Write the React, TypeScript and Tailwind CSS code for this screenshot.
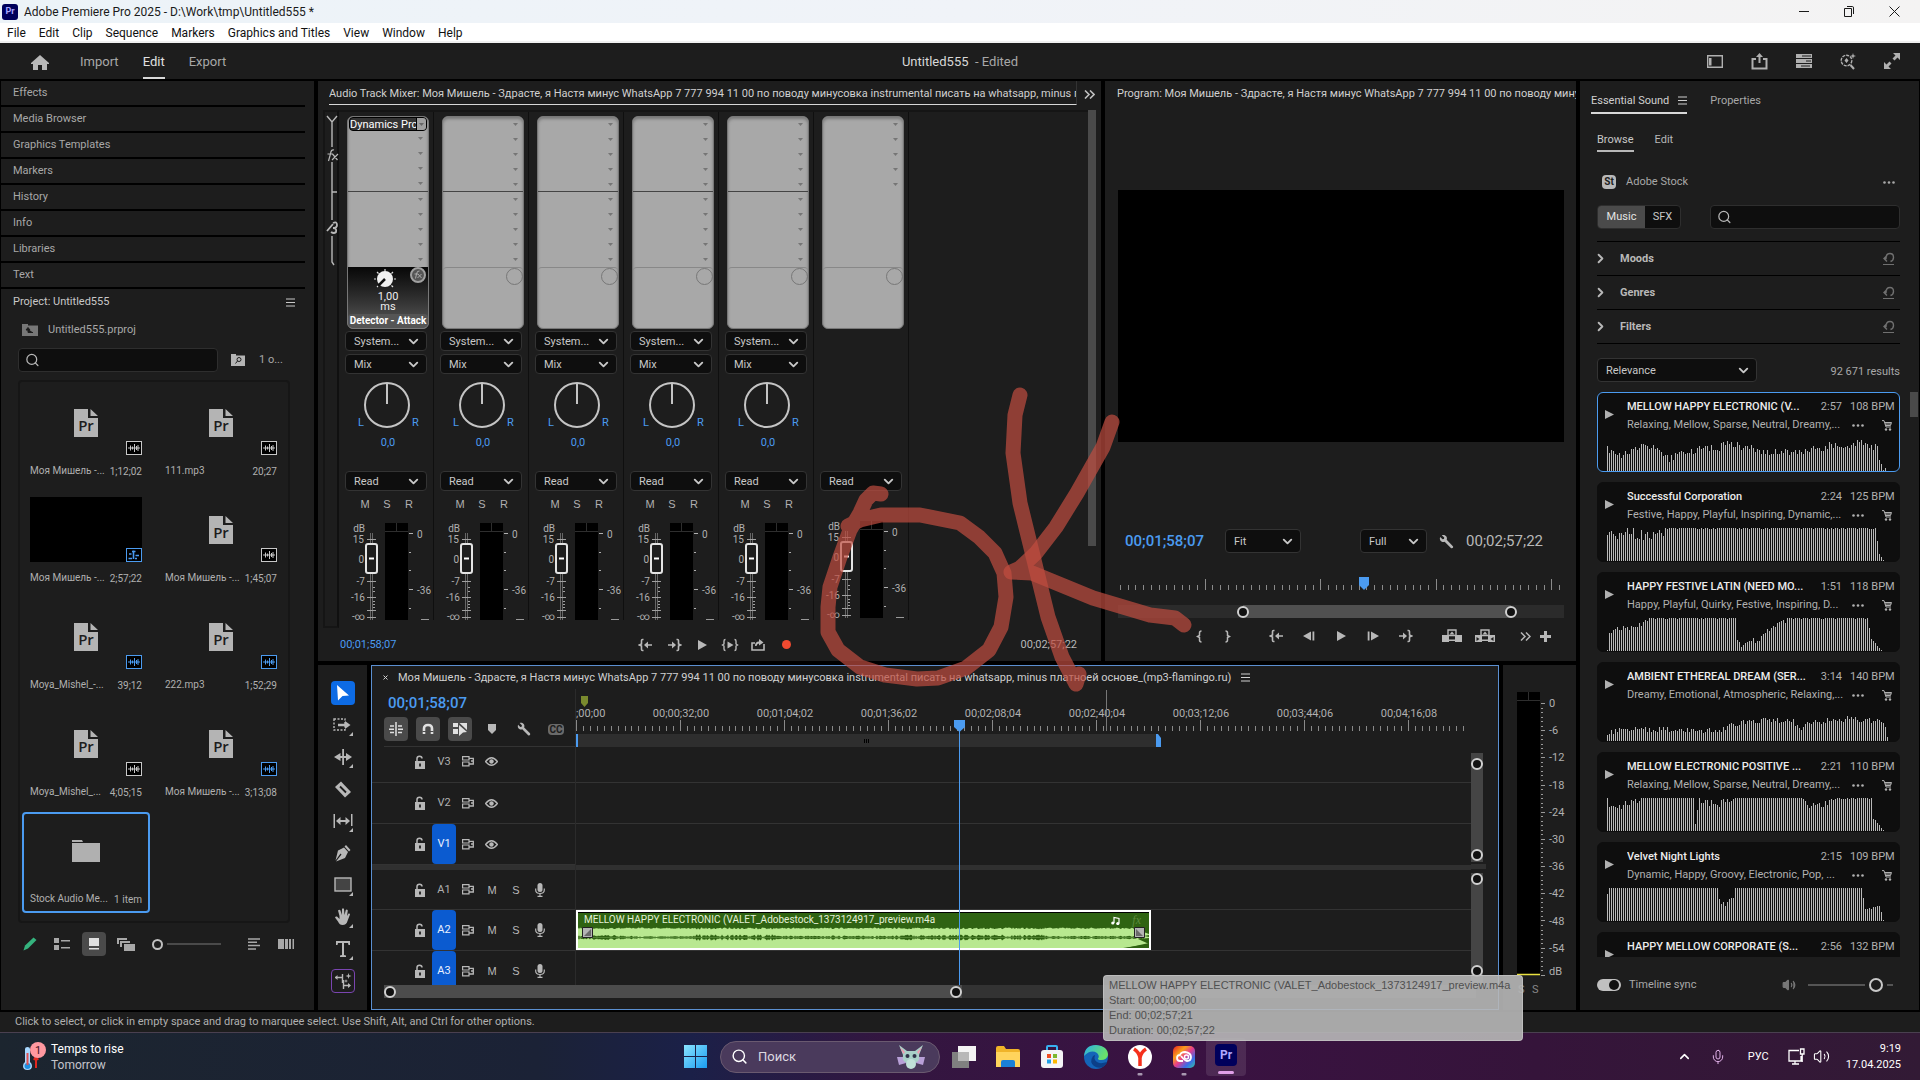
import React from 'react';
import { ChevronDown, ChevronRight, ChevronUp, Mic, Search, Volume2 } from 'lucide-react';

type Kids = { children: React.ReactNode };

function Ico({ w, h, children, className = '' }: { w: number; h: number; className?: string } & Kids) {
  return (
    <svg width={w} height={h} viewBox={`0 0 ${w} ${h}`} className={`shrink-0 ${className}`} fill="currentColor" aria-hidden="true">
      {children}
    </svg>
  );
}

function Btn({ label, className = '', children }: { label: string; className?: string } & Kids) {
  return (
    <button type="button" aria-label={label} className={`flex items-center justify-center ${className}`}>
      {children}
    </button>
  );
}

function Pick({ label, value, className }: { label: string; value: string; className: string }) {
  return (
    <div className={`relative ${className}`}>
      <select aria-label={label} className="h-full w-full appearance-none rounded border border-[#333] bg-[#0e0e0e] pl-2 pr-5 text-[11px] leading-none text-[#c8c8c8]">
        <option>{value}</option>
      </select>
      <ChevronDown className="pointer-events-none absolute right-1.5 top-1/2 -mt-[7px] text-[#c8c8c8]" size={15} strokeWidth={3} />
    </div>
  );
}

const Burger = () => (
  <Ico w={9} h={9}>
    <path d="M0 1h9M0 4.5h9M0 8h9" stroke="currentColor" strokeWidth="1" />
  </Ico>
);

const Wrench = ({ size = 16 }: { size?: number }) => (
  <svg width={size} height={size} viewBox="0 0 16 16" fill="currentColor" aria-hidden="true">
    <path d="M3 1.2 5.6 3.8 5.3 5.4 3.8 5.7 1.2 3.1C.5 5 1 7 2.6 8 3.7 8.700 5 8.800 6 8.300L12.700 15 C13.500 15.600 14.600 15.300 15 14.500 15.300 13.800 15.100 13.200 14.600 12.700L8.200 6.200C8.700 5 8.600 3.500 7.600 2.400 6.500 1.100 4.700.6 3 1.200Z" />
  </svg>
);

/* ---------- transport icons ---------- */
const GoIn = () => (
  <Ico w={16} h={14}>
    <path d="M5.500 1.500H4.500Q3.500 1.500 3.500 2.500V6L1.500 7 3.500 8V11.500Q3.500 12.500 4.500 12.500H5.500M9 7H14" stroke="currentColor" strokeWidth="1.600" fill="none" />
    <path d="M6 7 10 3.500V10.500Z" />
  </Ico>
);
const GoOut = () => (
  <Ico w={16} h={14}>
    <path d="M10.500 1.500H11.500Q12.500 1.500 12.500 2.500V6L14.500 7 12.500 8V11.500Q12.500 12.500 11.500 12.500H10.500M2 7H7" stroke="currentColor" strokeWidth="1.600" fill="none" />
    <path d="M10 7 6 3.500V10.500Z" />
  </Ico>
);
const Play = () => (
  <Ico w={12} h={12}>
    <path d="M2 1 11 6 2 11Z" />
  </Ico>
);
const PlayInOut = () => (
  <Ico w={18} h={14}>
    <path d="M4.500 1.500Q3 1.500 3 3V6L1.500 7 3 8V11Q3 12.500 4.500 12.500M13.500 1.500Q15 1.500 15 3V6L16.500 7 15 8V11Q15 12.500 13.500 12.500" stroke="currentColor" strokeWidth="1.400" fill="none" />
    <path d="M6.500 3.500 12.500 7 6.500 10.500Z" />
  </Ico>
);
const LoopIco = () => (
  <Ico w={16} h={14}>
    <path d="M5 5H2V12H14V6" stroke="currentColor" strokeWidth="1.600" fill="none" />
    <path d="M5 8Q5 3.500 9 3.500V1L13.500 4.500 9 7.500V5.500Q7 5.500 6.500 8Z" />
  </Ico>
);
const Brace = ({ flip = false }: { flip?: boolean }) => (
  <Ico w={7} h={13} className={flip ? '-scale-x-100' : ''}>
    <path d="M5.500 1Q3.500 1 3.500 3V5.500L1.500 6.500 3.500 7.500V10Q3.500 12 5.500 12" stroke="currentColor" strokeWidth="1.500" fill="none" />
  </Ico>
);
const StepBack = () => (
  <Ico w={12} h={12}>
    <path d="M8 1.500V10.500L0 6Z M9.500 1.500h1.800v9H9.500Z" />
  </Ico>
);
const Lift = ({ extract = false }: { extract?: boolean }) => (
  <Ico w={20} h={14}>
    <path d="M0 6H7V13H0ZM13 6H20V13H13ZM6.500 10.500H13.500V12H6.500Z" />
    <path d="M6 1H14V6.500H6Z" fill="none" stroke="currentColor" strokeWidth="1.400" />
    <path d="M10 2.500 12.500 5.500H7.500Z" />
    {extract && <path d="M1.500 8 4.500 10 1.500 12ZM18.500 8 15.500 10 18.500 12Z" fill="#1d1d1d" />}
  </Ico>
);

/* ---------- left column ---------- */
const collapsed = ['Effects', 'Media Browser', 'Graphics Templates', 'Markers', 'History', 'Info', 'Libraries', 'Text'];

type Clip = { name: string; time: string; kind: 'file' | 'seq' | 'bin'; blue?: boolean };
const clips: Clip[] = [
  { name: 'Моя Мишель -...', time: '1;12;02', kind: 'file' },
  { name: '111.mp3', time: '20;27', kind: 'file' },
  { name: 'Моя Мишель -...', time: '2;57;22', kind: 'seq', blue: true },
  { name: 'Моя Мишель -...', time: '1;45;07', kind: 'file' },
  { name: 'Moya_Mishel_-...', time: '39;12', kind: 'file', blue: true },
  { name: '222.mp3', time: '1;52;29', kind: 'file', blue: true },
  { name: 'Moya_Mishel_...', time: '4;05;15', kind: 'file' },
  { name: 'Моя Мишель -...', time: '3;13;08', kind: 'file', blue: true },
  { name: 'Stock Audio Me...', time: '1 item', kind: 'bin' },
];

const PrFile = () => (
  <div className="relative flex h-7 w-6 items-center justify-center">
    <svg width="24" height="28" viewBox="0 0 24 28" className="absolute inset-0 text-[#b4b4b4]" fill="currentColor" aria-hidden="true">
      <path d="M0 0H14V9H24V28H0ZM16.500 0 24 7H16.500Z" />
    </svg>
    <span className="relative mt-1 font-['Open_Sans'] text-[15px] font-semibold leading-4 text-[#1d1d1d]">Pr</span>
  </div>
);

function Badge({ seq, blue }: { seq: boolean; blue?: boolean }) {
  return (
    <Ico w={16} h={14} className={blue ? 'text-[#4b9bf0]' : 'text-[#c8c8c8]'}>
      <rect x="0.500" y="0.500" width="15" height="13" fill="#000" stroke="currentColor" />
      {seq ? (
        <path d="M7.500 2.500V11M6 3.500H9.500M3 6H5.500M9.500 7.500H13M2.500 10.500H6M9 10.500H11" stroke="currentColor" strokeWidth="1.600" />
      ) : (
        <path d="M2 7H14M4.500 4.500V9.500M6.500 5.500V8.500M8.500 3V11M10.500 5V9M12 4V10" stroke="currentColor" strokeWidth="1" />
      )}
    </Ico>
  );
}

function ProjectPanel() {
  return (
    <section className="flex w-[313px] shrink-0 flex-col bg-[#1d1d1d]">
      {collapsed.map((t) => (
        <button key={t} type="button" className="mr-[9px] flex h-[26px] items-center border-b-2 border-black pl-3 text-left text-[#a8a8a8]">
          {t}
        </button>
      ))}
      <div className="flex h-[26px] items-center justify-between pl-3 pr-[19px] text-[#c8c8c8]">
        <h2>Project: Untitled555</h2>
        <Btn label="Panel menu"><Burger /></Btn>
      </div>
      <div className="flex h-[30px] items-center gap-2.5 pl-[21px] text-[#a8a8a8]">
        <Ico w={16} h={12} className="text-[#777]">
          <path d="M0 0H6V1.500H16V12H0Z" />
          <path d="M6 5V8.500H11M6 3.500 4 6H8Z" stroke="#1d1d1d" fill="#1d1d1d" />
        </Ico>
        Untitled555.prproj
      </div>
      <div className="mt-[3px] flex h-6 items-center pl-[17px] text-[#a8a8a8]">
        <label className="flex h-6 w-[200px] items-center rounded border border-[#2e2e2e] bg-[#0e0e0e] pl-1.5">
          <Search size={16} className="text-[#b8b8b8]" />
          <input aria-label="Search project" className="w-full bg-transparent outline-none" />
        </label>
        <Btn label="Filter bin" className="ml-[13px] text-[#b4b4b4]">
          <Ico w={14} h={12}>
            <path d="M0 0H5V1.500H14V12H0Z" />
            <circle cx="8" cy="5.500" r="2" fill="none" stroke="#1d1d1d" />
            <path d="M6.500 7 4.500 9.500" stroke="#1d1d1d" />
          </Ico>
        </Btn>
        <span className="ml-3.5">1 о...</span>
      </div>
      <div className="ml-[17px] mr-6 mt-2 grid h-[543px] grid-cols-[128px_128px] content-start gap-x-[7px] gap-y-1.5 rounded border-2 border-[#161616] pl-0.5 pt-0.5">
        {clips.map((c, i) => (
          <article key={i} className={`flex h-[101px] flex-col rounded border-2 px-1.5 text-[#b0b0b0] ${c.kind === 'bin' ? 'border-[#4b9bf0]' : 'border-transparent'}`}>
            <div className={`relative mt-1 flex h-[65px] items-center justify-center ${c.kind === 'seq' ? 'bg-black' : ''}`}>
              {c.kind === 'file' && <PrFile />}
              {c.kind === 'bin' && (
                <Ico w={28} h={22}><path d="M0 0H10L11 2H0ZM0 3H28V22H0Z" /></Ico>
              )}
              {c.kind !== 'bin' && (
                <div className="absolute bottom-0 right-0"><Badge seq={c.kind === 'seq'} blue={c.blue} /></div>
              )}
            </div>
            <div className="mt-2 flex h-4 items-center justify-between whitespace-nowrap text-[10px]">
              <span>{c.name}</span>
              <span className="mt-0.5">{c.time}</span>
            </div>
          </article>
        ))}
      </div>
      <div className="mt-[9px] flex h-6 items-center pl-[21px] text-[#a8a8a8]">
        <Btn label="Writable" className="w-4 text-[#35b37e]">
          <Ico w={14} h={14}><path d="M10.500.5 13.500 3 5 11.500 .5 13.500 2 8.500Z" /></Ico>
        </Btn>
        <Btn label="List view" className="ml-4">
          <Ico w={16} h={12}><path d="M0 0H5V5H0ZM0 7H5V12H0ZM7 2H16V3.500H7ZM7 9H16V10.500H7Z" /></Ico>
        </Btn>
        <Btn label="Icon view" className="ml-3 h-6 w-6 rounded bg-[#4a4a4a] text-[#e0e0e0]">
          <Ico w={12} h={12}><path d="M1 0H11V8H1ZM1 10H11V11.500H1Z" /></Ico>
        </Btn>
        <Btn label="Freeform view" className="ml-[11px]">
          <Ico w={18} h={13}>
            <path d="M0 0H10V2H2V6H0ZM3 3H13V5H5V9H3ZM7 6H18V13H7Z" />
          </Ico>
        </Btn>
        <span className="ml-[17px] h-[11px] w-[11px] rounded-full border-2 border-[#c0c0c0]" />
        <span className="ml-1 h-0.5 w-[54px] bg-[#4a4a4a]" />
        <Btn label="Sort" className="ml-[27px]">
          <Ico w={13} h={12}><path d="M0 1H12M0 4.300H9M0 7.600H12M0 11H8" stroke="currentColor" strokeWidth="1.500" /></Ico>
        </Btn>
        <Btn label="Automate to sequence" className="ml-[17px]">
          <Ico w={16} h={10}><path d="M0 0H6V10H0ZM7 0H10V10H7ZM11 0H13V10H11ZM14.500 0H16V10H14.500Z" /></Ico>
        </Btn>
      </div>
    </section>
  );
}

/* ---------- audio mixer ---------- */
const Slot = ({ first = false }: { first?: boolean }) =>
  first ? (
    <div className="mx-px flex h-[14px] items-center justify-between overflow-hidden rounded-sm border border-black bg-[#333] text-[11px] leading-none text-white">
      <span className="w-[67px] overflow-hidden whitespace-nowrap">Dynamics Prc</span>
      <button type="button" aria-label="Effect slot" className="flex h-full w-2.5 items-center justify-center border-l border-black bg-[#a0a0a0] text-[#666]">
        <Ico w={5} h={3}><path d="M0 0H5L2.500 3Z" /></Ico>
      </button>
    </div>
  ) : (
    <button type="button" aria-label="Effect slot" className="flex h-[15px] w-full items-center justify-end pr-[5px] text-[#757575]">
      <Ico w={5} h={3}><path d="M0 0H5L2.500 3Z" /></Ico>
    </button>
  );

function EffectBox({ active, master }: { active: boolean; master: boolean }) {
  return (
    <div className="ml-2 mt-1 flex h-[213px] w-[82px] flex-col overflow-hidden rounded-md border border-[#777] bg-[#a8a8a8] shadow-[inset_0_2px_3px_#777]">
      <div className={`h-[75px] ${master ? '' : 'border-b border-[#444]'}`}>
        {[0, 1, 2, 3, 4].map((k) => <Slot key={k} first={active && k === 0} />)}
      </div>
      <div className="h-[75px]">{!master && [0, 1, 2, 3, 4].map((k) => <Slot key={k} />)}</div>
      {active ? (
        <div className="flex flex-1 flex-col items-center bg-gradient-to-b from-[#080808] to-[#5a5a5a] text-[#eee]">
          <div className="flex w-full justify-end">
            <svg width="60" height="22" viewBox="0 0 60 22" aria-hidden="true">
              <g stroke="#ddd" strokeWidth="1.200"><path d="M17 2V4M9 5 10.500 6.500M25 5 23.500 6.500M6 12H8M26 12H28M9 20 10.500 18.500M25 20 23.500 18.500" /></g>
              <circle cx="17" cy="12" r="8" fill="#f0f0f0" />
              <path d="M17 12 10 19" stroke="#111" strokeWidth="2.500" />
              <circle cx="50" cy="8" r="7" fill="#555" stroke="#a0a0a0" strokeWidth="2" />
              <path d="M51.500 4Q49 3.500 48.500 7L47.500 11.500M46.500 7H50M50 7 53.500 11M53.500 7 49.500 11" stroke="#aaa" fill="none" />
            </svg>
          </div>
          <span className="mt-0.5 leading-[11px]">1,00</span>
          <span className="leading-[10px]">ms</span>
          <span className="mt-auto flex w-full items-center justify-center whitespace-nowrap rounded-t bg-[#555] text-[10px] font-bold leading-[14px] text-white">Detector - Attack</span>
        </div>
      ) : (
        <div className="relative flex flex-1 justify-end rounded-t border-t border-[#888]">
          <span className="h-[17px] w-[17px] rounded-full border border-[#777]" />
        </div>
      )}
    </div>
  );
}

const Knob = () => (
  <svg width="95" height="76" className="block" fontSize="11" fill="#4b9bf0" aria-hidden="true">
    <circle cx="48" cy="31" r="22" fill="none" stroke="#c4c4c4" strokeWidth="2" />
    <path d="M48 9V30" stroke="#c4c4c4" strokeWidth="2" />
    <text x="19" y="52">L</text>
    <text x="73" y="52">R</text>
    <text x="49" y="72" textAnchor="middle">0,0</text>
  </svg>
);

const Fader = () => (
  <svg width="94" height="105" className="block" fontSize="10" fill="#b0b0b0" aria-hidden="true">
    <g textAnchor="end">
      <text x="26" y="17">dB</text>
      <text x="25" y="28">15</text>
      <text x="25" y="48">0</text>
      <text x="26" y="70">-7</text>
      <text x="26" y="86">-16</text>
      <text x="26" y="105">-∞</text>
    </g>
    <path d="M32.500 18V105" stroke="#666" strokeWidth="3" />
    <path d="M32.500 18V105" stroke="#1d1d1d" strokeWidth="1" />
    <path d="M28 24.500H37M28 66.500H37M28 82.500H37M28 95.500H37M28 102.500H37M34 72.500H36M34 76.500H36M34 86.500H36M34 89.500H36M34 92.500H36" stroke="#a0a0a0" />
    <rect x="27" y="29" width="11" height="29" rx="2" fill="#1d1d1d" stroke="#e4e4e4" strokeWidth="2" />
    <path d="M30 43.500H35" stroke="#fff" strokeWidth="2" />
    <rect x="46" y="8" width="23" height="97" fill="#000" />
    <path d="M46 16.500H69M57.500 8V16" stroke="#2e2e2e" />
    <path d="M70 18.500H74M70 37.500H72M70 55.500H72M70 74.500H74M70 93.500H72" stroke="#b0b0b0" />
    <text x="78" y="23">0</text>
    <text x="78" y="79">-36</text>
    <path d="M82 104.500H90" stroke="#999" />
  </svg>
);

function Strip({ index }: { index: number }) {
  const master = index === 5;
  return (
    <div className="w-[95px] shrink-0 overflow-hidden border-r border-[#0f0f0f]">
      <EffectBox active={index === 0} master={master} />
      {master ? (
        <div className="h-[142px]" />
      ) : (
        <>
          <Pick label="Track input" value="System..." className="ml-1.5 mt-0.5 h-5 w-[82px]" />
          <Pick label="Track output" value="Mix" className="ml-1.5 mt-[3px] h-5 w-[82px]" />
          <Knob />
          <div className="h-[21px]" />
        </>
      )}
      <Pick label="Automation mode" value="Read" className="ml-1.5 h-5 w-[82px]" />
      {master ? (
        <div className="h-[22px]" />
      ) : (
        <div className="mb-0.5 ml-[15px] mt-1 flex h-[18px] font-['Liberation_Sans'] text-[#b0b0b0]">
          {['M', 'S', 'R'].map((l) => <button key={l} type="button" className="w-[22px]">{l}</button>)}
        </div>
      )}
      <Fader />
    </div>
  );
}

const sequence = 'Моя Мишель - Здрасте, я Настя минус WhatsApp 7 777 994 11 00 по поводу минусовка instrumental писать на whatsapp, minus платноей основе_(mp3-flamingo.ru)';
const mixerTitle = `Audio Track Mixer: ${sequence.slice(0, sequence.indexOf('атноей'))}`;
const programTitle = `Program: ${sequence.slice(0, sequence.indexOf('совка'))}`;

function MixerPanel() {
  return (
    <section className="flex w-[783px] shrink-0 flex-col overflow-hidden bg-[#1d1d1d]">
      <div className="flex h-[29px] items-start pl-[11px]">
        <h2 className="h-6 w-[748px] overflow-hidden whitespace-nowrap border-b border-r border-b-[#d8d8d8] border-r-[#333] leading-[26px] text-[#d0d0d0]">{mixerTitle}</h2>
        <Btn label="More tabs" className="h-[26px] w-6 text-[#c0c0c0]">
          <Ico w={11} h={9}><path d="M1 .5 5 4.500 1 8.500M6 .5 10 4.500 6 8.500" fill="none" stroke="currentColor" strokeWidth="1.600" /></Ico>
        </Btn>
      </div>
      <div className="flex h-[518px] pl-[5px] pr-[5px]">
        <div className="w-4 border-2 border-[#151515] border-r-[#101010] text-[#b8b8b8]">
          <svg width="14" height="160" className="block" fill="none" stroke="currentColor" strokeWidth="1.400" aria-hidden="true">
            <path d="M2 4 7 10 12 4M7 10V35M7 50V80H12M7 80V108M7 124V150L9 153" />
            <path d="M9 38Q6 37 5.500 42L3.500 49M2.500 42H8M7.500 42 12.500 48M13 42 7 48" strokeWidth="1.200" />
            <path d="M2 119 8 112M8 111Q12 109 12 113 12 116 8 116 12 116 11 120 9 122 6 120" strokeWidth="1.800" />
          </svg>
        </div>
        <div className="flex h-[510px] flex-1 overflow-hidden border-t-2 border-[#151515]">
          {[0, 1, 2, 3, 4, 5].map((i) => <Strip key={i} index={i} />)}
        </div>
        <div className="h-[436px] w-2 bg-[#4a4a4a]" />
      </div>
      <div className="flex flex-1 items-center pl-[22px] pr-6 text-[#b8b8b8]">
        <span className="w-[292px] text-[#4b9bf0]">00;01;58;07</span>
        <div className="flex flex-1">
          <Btn label="Go to in" className="w-7"><GoIn /></Btn>
          <Btn label="Go to out" className="w-7"><GoOut /></Btn>
          <Btn label="Play" className="w-7"><Play /></Btn>
          <Btn label="Play in to out" className="w-7"><PlayInOut /></Btn>
          <Btn label="Loop" className="w-7"><LoopIco /></Btn>
          <Btn label="Record" className="w-7"><span className="h-[9px] w-[9px] rounded-full bg-[#f04a30]" /></Btn>
        </div>
        <span>00;02;57;22</span>
      </div>
    </section>
  );
}

/* ---------- program monitor ---------- */
function ProgramPanel() {
  const ticks = Array.from({ length: 58 }, (_, i) => 2 + Math.round(i * 7.7));
  return (
    <section className="flex min-w-0 flex-1 flex-col overflow-hidden bg-[#1d1d1d]">
      <h2 className="h-[109px] overflow-hidden whitespace-nowrap pl-3 leading-[26px] text-[#d0d0d0]">{programTitle}</h2>
      <div className="ml-[13px] mr-3 h-[252px] bg-black" />
      <div className="mt-[87px] flex h-6 items-center pl-5 pr-[33px] text-[#b8b8b8]">
        <span className="text-[15px] font-medium text-[#4b9bf0]">00;01;58;07</span>
        <Pick label="Zoom level" value="Fit" className="ml-[21px] h-6 w-[76px]" />
        <Pick label="Playback resolution" value="Full" className="ml-auto h-6 w-[67px]" />
        <Btn label="Settings" className="ml-3"><Wrench size={15} /></Btn>
        <span className="ml-3 text-[15px]">00;02;57;22</span>
      </div>
      <svg width="100%" height="16" className="ml-[13px] mt-6 block" aria-hidden="true">
        {ticks.map((x, i) => <rect key={i} x={x} y={i % 15 === 11 ? 2 : 8} width="1" height={i % 15 === 11 ? 11 : 5} fill="#8a8a8a" />)}
        <path d="M241 0H251V8L246 13 241 8Z" fill="#4b9bf0" />
      </svg>
      <div className="ml-[13px] mr-3 mt-3 flex h-[13px] items-center bg-[#2b2b2b]">
        <div className="ml-[119px] flex h-[13px] w-[280px] items-center justify-between bg-[linear-gradient(90deg,transparent_6px,#505050_6px,#505050_calc(100%-6px),transparent_calc(100%-6px))]">
          <span className="h-3 w-3 rounded-full border-2 border-[#d0d0d0] bg-[#111]" />
          <span className="h-3 w-3 rounded-full border-2 border-[#d0d0d0] bg-[#111]" />
        </div>
      </div>
      <div className="mt-2 flex h-5 items-center pl-[84px] text-[#b8b8b8]">
        <Btn label="Mark in" className="w-5"><Brace /></Btn>
        <Btn label="Mark out" className="ml-2 w-5"><Brace flip /></Btn>
        <Btn label="Go to in" className="ml-[30px] w-5"><GoIn /></Btn>
        <Btn label="Step back" className="ml-3 w-5"><StepBack /></Btn>
        <Btn label="Play" className="ml-3 w-5"><Play /></Btn>
        <Btn label="Step forward" className="ml-3 w-5 -scale-x-100"><StepBack /></Btn>
        <Btn label="Go to out" className="ml-3 w-5"><GoOut /></Btn>
        <Btn label="Lift" className="ml-[27px] w-5"><Lift /></Btn>
        <Btn label="Extract" className="ml-[13px] w-5"><Lift extract /></Btn>
        <Btn label="More" className="ml-5 w-5">
          <Ico w={11} h={9}><path d="M1 .5 5 4.500 1 8.500M6 .5 10 4.500 6 8.500" fill="none" stroke="currentColor" strokeWidth="1.500" /></Ico>
        </Btn>
        <Btn label="Add button" className="w-5">
          <Ico w={11} h={11}><path d="M4 0H7V4H11V7H7V11H4V7H0V4H4Z" /></Ico>
        </Btn>
      </div>
    </section>
  );
}

/* ---------- tools ---------- */
const corner = <path d="M21 18V22H17Z" />;
const tools: { name: string; art: React.ReactNode }[] = [
  { name: 'Track select', art: <><rect x="2" y="5" width="11" height="11" fill="none" stroke="currentColor" strokeWidth="1.400" strokeDasharray="2 1.500" /><path d="M6 9.800H13V7L18.500 11 13 15V12.200H6Z" />{corner}</> },
  { name: 'Ripple edit', art: <><path d="M10.200 3H12V19H10.200ZM8.500 7V10H14V7L20 11 14 15V12H8.500V15L2 11 8.500 7Z" />{corner}</> },
  { name: 'Razor', art: <><path d="M3 9 9 3.500 19 14 13 19.500Z" /><path d="M8 8.500 14 14.500" stroke="#1d1d1d" strokeWidth="1.800" /></> },
  { name: 'Slip', art: <><path d="M1.500 4H3V18H1.500ZM19 4H20.500V16H19ZM8.500 7 4 11 8.500 15V12H13.500V15L18 11 13.500 7V10H8.500Z" fillRule="evenodd" />{corner}</> },
  { name: 'Pen', art: <path d="M14 3 18.500 8 17 9.500 12.500 4.500ZM12 5.500 16 10 13 16 4 19.500 9.500 12.500 8.500 11.500 3.500 18.500 6 8.500Z" /> },
  { name: 'Rectangle', art: <><rect x="3" y="4" width="16" height="13" fill="#444" stroke="currentColor" strokeWidth="1.400" />{corner}</> },
  { name: 'Hand', art: <><path d="M7.500 10 6 4.500Q7.500 3 8.500 4.500L9.800 9 10 3Q11 1.500 12 3L12.500 9 13.800 4Q15 3 15.800 4.500L15 10 16.500 7.500Q18 7 18 8.500L15.500 15Q14.500 19 10.500 19 7.500 19 6 15.500L3 11.500Q3.500 10 5 10.500L7.500 13Z" />{corner}</> },
  { name: 'Type', art: <><path d="M4 3H18V7H16.500L16 5H12V17L14 17.500V19H8V17.500L10 17V5H6L5.500 7H4Z" />{corner}</> },
];

function ToolsPanel() {
  return (
    <section aria-label="Tools" className="flex w-[49px] shrink-0 flex-col items-center gap-2 bg-[#1d1d1d] pt-4 text-[#b8b8b8]">
      <Btn label="Selection" className="h-6 w-6 rounded bg-[#0d6be4] text-white">
        <Ico w={14} h={18}><path d="M1 1 13 11.500 6.500 12 2 16.500Z" /></Ico>
      </Btn>
      {tools.map((t) => (
        <Btn key={t.name} label={t.name} className="h-6 w-6"><Ico w={22} h={22}>{t.art}</Ico></Btn>
      ))}
      <Btn label="Generative extend" className="h-6 w-6 rounded border border-[#7a45b0]">
        <Ico w={18} h={18}>
          <path d="M1 5.500H8M8.500 2V11M9.500 8V17M10 13.500H16" fill="none" stroke="currentColor" strokeWidth="1.400" />
          <path d="M3.500 3 1 5.500 3.500 8ZM14 11 17 13.500 14 16ZM14.500 1 15.200 3.300 17.500 4 15.200 4.700 14.500 7 13.800 4.700 11.500 4 13.800 3.300ZM12 7 12.500 8.500 14 9 12.500 9.500 12 11 11.500 9.500 10 9 11.500 8.500Z" />
        </Ico>
      </Btn>
    </section>
  );
}

/* ---------- timeline ---------- */
const rulerLabels = ['00;00;32;00', '00;01;04;02', '00;01;36;02', '00;02;08;04', '00;02;40;04', '00;03;12;06', '00;03;44;06', '00;04;16;08'];

const Lock = () => (
  <Ico w={11} h={14}>
    <path d="M0 6H10V14H0Z" />
    <path d="M2 6.500V3.500Q2 1.200 4.500 1.200 7 1.200 7 3.500" fill="none" stroke="currentColor" strokeWidth="1.500" />
    <path d="M5 8.500V11.500" stroke="#1d1d1d" strokeWidth="1.800" />
  </Ico>
);
const SyncLock = () => (
  <Ico w={12} h={11}>
    <path d="M.6 .6H7V4H.6ZM.6 6H7V9.800H.6Z" fill="none" stroke="currentColor" strokeWidth="1.200" />
    <path d="M7 2.300H11.300V8H7M9 5H11" fill="none" stroke="currentColor" strokeWidth="1.300" />
  </Ico>
);
const Eye = () => (
  <Ico w={13} h={9}>
    <path d="M.6 4.500Q6.500-3 12.400 4.500 6.500 12 .6 4.500Z" fill="none" stroke="currentColor" strokeWidth="1.300" />
    <circle cx="6.500" cy="4.500" r="2.200" />
  </Ico>
);
const MicIco = () => (
  <Ico w={10} h={14}>
    <rect x="2.500" y="0" width="5" height="9" rx="2.500" />
    <path d="M.7 5.500V7Q.7 10.500 5 10.500 9.300 10.500 9.300 7V5.500M5 10.500V13M2.500 13.300H7.500" fill="none" stroke="currentColor" strokeWidth="1.200" />
  </Ico>
);

function TrackHead({ name, on, className }: { name: string; on?: boolean; className: string }) {
  const audio = name[0] === 'A';
  return (
    <div className={`flex shrink-0 items-center overflow-hidden border-b border-[#333] pl-[42px] ${className}`}>
      <Btn label={`Lock ${name}`} className="w-3"><Lock /></Btn>
      <button type="button" className={`ml-1.5 h-full w-6 rounded ${on ? 'bg-[#0b5bd0] text-[#e8f0ff]' : 'text-[#b0b0b0]'}`}>{name}</button>
      <Btn label={`Sync lock ${name}`} className="ml-1.5 w-3"><SyncLock /></Btn>
      {audio ? (
        <div className="flex font-['Liberation_Sans']">
          <button type="button" className="ml-1.5 w-6">M</button>
          <button type="button" className="w-6">S</button>
          <Btn label={`Record voice-over ${name}`} className="w-6"><MicIco /></Btn>
        </div>
      ) : (
        <Btn label={`Toggle ${name} output`} className="ml-[11px]"><Eye /></Btn>
      )}
    </div>
  );
}

function jag(y: number, amp: (x: number) => number, from: number, to: number, dir: number) {
  let d = `M${from} ${y}`;
  for (let x = from; x <= to; x += 1) {
    const n = Math.abs(Math.sin(x * 12.9898) * 43758.5453) % 1;
    d += `L${x} ${(y + dir * (0.5 + n * amp(x))).toFixed(1)}`;
  }
  return `${d}L${to} ${y}Z`;
}

function ClipWave() {
  const loud = (x: number) => (x < 55 ? 2 : x < 116 ? 0.8 : x < 200 ? 2.8 : x < 320 ? 1.6 : x < 470 ? 2.6 : 1.2);
  return (
    <svg width="571" height="21" className="block" aria-hidden="true">
      <path d="M0 0H571V8L566 9 571 10V21L571 16 548 21H0Z" fill="#b8e890" />
      <path d={jag(0, (x) => 1 + loud(x) / 3, 0, 560, 1)} fill="#2f6312" />
      <path d={jag(10.500, loud, 0, 566, 1)} fill="#2f6312" />
      <path d={jag(10.500, loud, 0, 566, -1)} fill="#2f6312" />
      <path d="M552 0H571V7L560 3ZM560 12 571 11V17Z M571 17V21H545Z" fill="#2f6312" />
    </svg>
  );
}

const Dot = () => <span className="h-3 w-3 shrink-0 rounded-full border-2 border-[#d0d0d0] bg-[#111]" />;

function TimelinePanel() {
  const ticks = Array.from({ length: 129 }, (_, i) => i);
  return (
    <section className="flex min-w-0 flex-1 flex-col overflow-hidden border border-[#5b8fd0] bg-[#1d1d1d] text-[#b8b8b8]">
      <div className="flex h-[23px] items-center whitespace-nowrap pl-2.5 text-[#d0d0d0]">
        <Btn label="Close tab" className="mr-2.5 w-1.5"><Ico w={5} h={5}><path d="M.5.5 4.500 4.500M4.500.5.5 4.500" stroke="currentColor" /></Ico></Btn>
        <h2 className="mr-2.5">{sequence}</h2>
        <Btn label="Panel menu"><Burger /></Btn>
      </div>
      <div className="flex min-h-0 flex-1">
        <div className="flex w-[204px] shrink-0 flex-col border-r border-[#2b2b2b]">
          <div className="ml-3 h-[58px] shrink-0 border-b border-[#333]">
            <div className="h-7 pl-1 pt-1 text-[15px] font-medium leading-5 text-[#4b9bf0]">00;01;58;07</div>
            <div className="flex items-center gap-2">
              <Btn label="Nest sequences" className="h-6 w-6 rounded bg-[#4a4a4a] text-[#e0e0e0]">
                <Ico w={14} h={14}><path d="M7 0V14M1 4H5M9 4H13M0 7.300H5M9 7.300H14M1 10.500H5M9 10.500H13" stroke="currentColor" strokeWidth="1.500" /></Ico>
              </Btn>
              <Btn label="Snap" className="h-6 w-6 rounded bg-[#4a4a4a] text-[#e0e0e0]">
                <Ico w={12} h={12}><path d="M2 11V5.500Q2 2 6 2 10 2 10 5.500V11" fill="none" stroke="currentColor" strokeWidth="2.600" /><path d="M.5 8.500H4M8 8.500H11.500" stroke="#4a4a4a" /></Ico>
              </Btn>
              <Btn label="Linked selection" className="h-6 w-6 rounded bg-[#4a4a4a] text-[#e0e0e0]">
                <Ico w={14} h={14}><path d="M0 1H5V5H0ZM0 7H5V12H0ZM6.500 1H14V8L6.500 1ZM6 3 14 10 10 10.500 6 14Z" /></Ico>
              </Btn>
              <Btn label="Add marker" className="h-6 w-6"><Ico w={8} h={10}><path d="M0 0H8V6L4 10 0 6Z" /></Ico></Btn>
              <Btn label="Timeline settings" className="h-6 w-6"><Wrench size={14} /></Btn>
              <Btn label="Captions" className="h-6 w-6">
                <span className="rounded-sm bg-[#6a6a6a] px-px text-[10px] font-bold leading-[11px] text-[#1d1d1d]">CC</span>
              </Btn>
            </div>
          </div>
          <TrackHead name="V3" className="h-[36px] pb-1.5" />
          <TrackHead name="V2" className="h-[41px]" />
          <TrackHead name="V1" on className="h-[41px]" />
          <div className="h-[5px] shrink-0 bg-[#303030]" />
          <TrackHead name="A1" className="h-[40px]" />
          <TrackHead name="A2" on className="h-[41px]" />
          <div className="min-h-0 flex-1 overflow-hidden"><TrackHead name="A3" on className="h-[41px]" /></div>
        </div>
        <div className="relative flex min-w-0 flex-1 flex-col">
          <svg width="100%" height="45" className="block shrink-0" fontSize="11" fill="#b0b0b0" aria-hidden="true">
            <text x="0" y="28">;00;00</text>
            {rulerLabels.map((t, i) => <text key={t} x={104 * (i + 1) + 1} y="28" textAnchor="middle">{t}</text>)}
            {ticks.map((i) => {
              const big = i % 15 === 0;
              return <rect key={i} x={Math.round(i * 6.932)} y={big ? 31 : 37} width="1" height={big ? 11 : 5} fill="#8a8a8a" />;
            })}
            <path d="M5 7H12V14L8.500 18 5 14Z" fill="#7a8a2e" />
            <rect x="530" y="1" width="1" height="41" fill="#777" />
            <path d="M378 31H389V38L383.500 43 378 38Z" fill="#4b9bf0" />
          </svg>
          <div className="flex h-[13px] w-[585px] shrink-0 items-center border-l-2 border-[#4b9bf0]">
            <div className="flex h-full flex-1 items-center justify-center bg-[#2e2e2e]">
              <Ico w={6} h={4}><path d="M.5 0V4M2.500 0V4M4.500 0V4" stroke="#000" /></Ico>
            </div>
            <Ico w={5} h={13}><path d="M0 0H2L5 4V13H0Z" fill="#4b9bf0" /></Ico>
          </div>
          <div className="h-9 border-b border-[#333]" />
          <div className="h-[41px] border-b border-[#333]" />
          <div className="h-[41px]" />
          <div className="h-[5px] bg-[#303030]" />
          <div className="h-[40px] border-b border-[#333]" />
          <div className="h-[41px] border-b border-[#333]">
            <div className="h-10 w-[575px] border-2 border-white bg-[#2f6312]">
              <div className="flex h-[15px] items-center whitespace-nowrap border-t border-black pl-1.5 text-[10px] leading-none text-[#e4f0d8]">
                MELLOW HAPPY ELECTRONIC (VALET_Adobestock_1373124917_preview.m4a
                <Ico w={9} h={9} className="ml-auto text-white">
                  <path d="M3 7V1.500L8 2.500V7.500" fill="none" stroke="currentColor" strokeWidth="1.200" />
                  <circle cx="1.800" cy="7" r="1.600" /><circle cx="6.800" cy="7.500" r="1.600" />
                </Ico>
                <span className="ml-3 mr-2 font-['Liberation_Serif'] text-[12px] italic text-[#5c8a3c]">fx</span>
              </div>
              <div className="relative">
                <ClipWave />
                <Ico w={11} h={11} className="absolute left-1 top-0"><path d="M.5.5H10.500V10.500H.5Z" fill="#b4b4b4" stroke="#222" /><path d="M9 2V9H2Z" fill="#6a6a6a" /></Ico>
                <Ico w={11} h={11} className="absolute right-1 top-0"><path d="M.5.5H10.500V10.500H.5Z" fill="#b4b4b4" stroke="#222" /><path d="M2 2 9 9H2Z" fill="#6a6a6a" /></Ico>
              </div>
            </div>
          </div>
          <div className="flex-1" />
          <div className="absolute bottom-0 left-[383px] top-[42px] w-px bg-[#4b9bf0]" />
        </div>
        <div className="flex w-[27px] shrink-0 flex-col">
          <div className="mt-16 flex h-[109px] w-3 flex-col justify-between bg-[#454545] pb-px pt-[5px]"><Dot /><Dot /></div>
          <div className="mr-3 mt-0.5 h-[5px] bg-[#303030]" />
          <div className="mt-1 flex w-3 flex-1 flex-col justify-between bg-[#454545] pb-2"><Dot /><Dot /></div>
        </div>
      </div>
      <div className="mb-[11px] ml-3 mr-[22px] flex h-[13px] shrink-0 bg-[#333]">
        <div className="flex w-[578px] items-center justify-between bg-[#4c4c4c]"><Dot /><Dot /></div>
      </div>
    </section>
  );
}

function MeterPanel() {
  const marks = ['0', '-6', '-12', '-18', '-24', '-30', '-36', '-42', '-48', '-54'];
  return (
    <section aria-label="Audio meters" className="w-[73px] shrink-0 bg-[#1d1d1d]">
      <svg width="73" height="345" className="block" fontSize="11" fill="#b0b0b0" aria-hidden="true">
        <rect x="14" y="27" width="23" height="283" fill="#000" />
        <path d="M14 35.500H37M25.500 27V35" stroke="#2e2e2e" />
        {Array.from({ length: 61 }, (_, i) => (
          <rect key={i} x="38" y={38 + Math.round(i * 4.53)} width={i % 6 === 0 ? 4 : 2} height="1" fill="#9a9a9a" />
        ))}
        {marks.map((m, i) => <text key={m} x="46" y={42 + Math.round(i * 27.200)}>{m}</text>)}
        <text x="46" y="310">dB</text>
        <path d="M14 309.500H37" stroke="#e8e040" strokeWidth="1.500" />
        <text x="15" y="328" fill="#888">S</text>
        <text x="29" y="328" fill="#888">S</text>
      </svg>
    </section>
  );
}

/* ---------- essential sound ---------- */
type Pt = [number, number];
type Sound = { title: string; len: string; bpm: string; tags: string; env: Pt[]; noise: number; quiet?: [number, number] };
const sounds: Sound[] = [
  { title: 'MELLOW HAPPY ELECTRONIC (V...', len: '2:57', bpm: '108 BPM', tags: 'Relaxing, Mellow, Sparse, Neutral, Dreamy,...', noise: 8, env: [[0, 24], [8, 19], [18, 26], [26, 26], [30, 15], [36, 18], [48, 26], [54, 24], [62, 31], [70, 25], [80, 21], [90, 22], [106, 24], [112, 28], [126, 30], [135, 27], [136, 12], [139, 3]] },
  { title: 'Successful Corporation', len: '2:24', bpm: '125 BPM', tags: 'Festive, Happy, Playful, Inspiring, Dynamic,...', noise: 12, quiet: [0, 28], env: [[0, 32], [26, 30], [29, 33], [134, 33], [135, 20], [136, 7], [138, 1]] },
  { title: 'HAPPY FESTIVE LATIN (NEED MO...', len: '1:51', bpm: '118 BPM', tags: 'Happy, Playful, Quirky, Festive, Inspiring, D...', noise: 5, quiet: [0, 90], env: [[0, 0], [1, 20], [4, 24], [10, 24], [22, 33], [64, 33], [65, 12], [67, 4], [72, 14], [74, 10], [80, 22], [90, 33], [130, 33], [132, 12], [137, 1]] },
  { title: 'AMBIENT ETHEREAL DREAM (SER...', len: '3:14', bpm: '140 BPM', tags: 'Dreamy, Emotional, Atmospheric, Relaxing,...', noise: 6, env: [[0, 8], [6, 14], [18, 13], [40, 13], [55, 12], [66, 20], [74, 22], [92, 22], [98, 14], [102, 22], [112, 22], [116, 24], [138, 22], [139, 15], [140, 4]] },
  { title: 'MELLOW ELECTRONIC POSITIVE ...', len: '2:21', bpm: '110 BPM', tags: 'Relaxing, Mellow, Sparse, Neutral, Dreamy,...', noise: 8, quiet: [0, 110], env: [[0, 32], [2, 27], [20, 33], [43, 35], [44, 12], [46, 32], [56, 29], [66, 35], [97, 35], [102, 26], [108, 30], [116, 33], [132, 33], [133, 13], [138, 1]] },
  { title: 'Velvet Night Lights', len: '2:15', bpm: '109 BPM', tags: 'Dynamic, Happy, Groovy, Electronic, Pop, ...', noise: 6, quiet: [54, 64], env: [[0, 27], [1, 34], [55, 34], [56, 24], [59, 18], [63, 24], [64, 34], [127, 34], [129, 12], [136, 15], [138, 2]] },
  { title: 'HAPPY MELLOW CORPORATE (S...', len: '2:56', bpm: '132 BPM', tags: '', noise: 6, env: [[0, 20], [139, 20]] },
];

function heights(s: Sound) {
  const out: number[] = [];
  for (let i = 0; i <= s.env[s.env.length - 1][0]; i += 1) {
    let k = 0;
    while (k < s.env.length - 2 && s.env[k + 1][0] < i) k += 1;
    const [x0, y0] = s.env[k];
    const [x1, y1] = s.env[k + 1];
    const base = y0 + ((y1 - y0) * (i - x0)) / (x1 - x0);
    const n = Math.abs(Math.sin((i + 1) * 78.233 + s.noise) * 43758.5453) % 1;
    const noisy = s.quiet ? i >= s.quiet[0] && i <= s.quiet[1] && base < 33 : base > 5;
    out.push(Math.max(1, Math.min(33, Math.round(noisy ? base - n * s.noise + s.noise * 0.2 : base - (n > 0.8 ? 1 : 0)))));
  }
  return out;
}

function SoundCard({ s, active }: { s: Sound; active: boolean }) {
  return (
    <article className={`h-20 shrink-0 rounded-md border bg-[#0e0e0e] text-[#b0b0b0] ${active ? 'border-[#4b9bf0]' : 'border-[#0e0e0e]'}`}>
      <div className="flex">
        <Btn label={`Play ${s.title}`} className="ml-1.5 mt-[15px] h-3 w-2.5"><Ico w={9} h={9}><path d="M0 0 9 4.500 0 9Z" /></Ico></Btn>
        <div className="ml-[13px] mr-[5px] mt-[5px] min-w-0 flex-1">
          <div className="flex h-[18px] items-center whitespace-nowrap">
            <h3 className="flex-1 overflow-hidden font-medium text-[#ececec]">{s.title}</h3>
            <span className="mr-2">{s.len}</span>
            <span className="w-11 text-right">{s.bpm}</span>
          </div>
          <div className="flex h-[18px] items-center whitespace-nowrap">
            <p className="flex-1 overflow-hidden">{s.tags}</p>
            <Btn label="More" className="mr-[18px]"><Ico w={12} h={3}><circle cx="1.500" cy="1.500" r="1.300" /><circle cx="6" cy="1.500" r="1.300" /><circle cx="10.500" cy="1.500" r="1.300" /></Ico></Btn>
            <Btn label="License" className="mr-0.5">
              <Ico w={10} h={11}>
                <path d="M0 .6H2L4 7H9M2.500 2.500H9.500L8.500 5.500H3.500M3 4H9" fill="none" stroke="currentColor" />
                <circle cx="4" cy="9.500" r="1.200" /><circle cx="8" cy="9.500" r="1.200" />
              </Ico>
            </Btn>
          </div>
        </div>
      </div>
      <svg width="284" height="33" className="ml-[9px] mt-1 block" aria-hidden="true">
        {heights(s).map((h, i) => <rect key={i} x={i * 2} y={33 - h} width="1" height={h} fill="#b8b8b8" />)}
      </svg>
    </article>
  );
}

function SoundPanel() {
  return (
    <section className="flex w-[339px] shrink-0 flex-col bg-[#1d1d1d] text-[#a8a8a8]">
      <div className="flex h-[33px] items-end gap-[23px] pl-[11px]">
        <button type="button" className="flex h-[25px] items-center gap-[9px] border-b-2 border-[#d8d8d8] text-[#d0d0d0]">
          Essential Sound <Burger />
        </button>
        <button type="button" className="flex h-[25px] items-center pb-0.5">Properties</button>
      </div>
      <div className="mt-4 flex h-[22px] gap-[21px] pl-[17px]">
        <button type="button" className="border-b-2 border-[#b8b8b8] text-[#c8c8c8]">Browse</button>
        <button type="button" className="pb-0.5 text-[#b8b8b8]">Edit</button>
      </div>
      <div className="ml-[22px] mr-6 mt-5 flex h-5 items-center">
        <span className="mr-2.5 flex h-[14px] w-[14px] items-center justify-center rounded-sm bg-[#b8b8b8] text-[10px] font-bold leading-none text-[#1d1d1d]">St</span>
        <span className="flex-1">Adobe Stock</span>
        <Btn label="More"><Ico w={12} h={3}><circle cx="1.500" cy="1.500" r="1.300" /><circle cx="6" cy="1.500" r="1.300" /><circle cx="10.500" cy="1.500" r="1.300" /></Ico></Btn>
      </div>
      <div className="ml-[17px] mr-[19px] mt-[13px] flex h-6">
        <div className="flex w-[84px] overflow-hidden rounded border border-[#2e2e2e] bg-[#0e0e0e] text-[#c8c8c8]">
          <button type="button" className="w-[47px] bg-[#4a4a4a] text-[#e4e4e4]">Music</button>
          <button type="button" className="flex-1">SFX</button>
        </div>
        <label className="ml-[29px] flex flex-1 items-center rounded border border-[#2e2e2e] bg-[#0e0e0e] pl-1.5">
          <Search size={16} className="text-[#b8b8b8]" />
          <input aria-label="Search stock audio" className="w-full bg-transparent outline-none" />
        </label>
      </div>
      <div className="ml-[17px] mr-[19px] mt-3 border-t border-black">
        {['Moods', 'Genres', 'Filters'].map((t) => (
          <div key={t} className="flex h-[34px] items-center border-b border-black pr-[5px] font-bold text-[#b8b8b8]">
            <ChevronRight size={15} strokeWidth={3} className="-ml-1" />
            <span className="ml-3 flex-1">{t}</span>
            <Btn label={`Reset ${t}`} className="text-[#707070]">
              <Ico w={13} h={13}><path d="M1 12.500H12" stroke="currentColor" /><path d="M5 9.500 2 6.500 5 3.500M2.500 6.500H4Q4 1.500 8 1.500 11.500 1.500 11.500 5.500 11.500 8.500 8.500 9.500" fill="none" stroke="currentColor" strokeWidth="1.400" /></Ico>
            </Btn>
          </div>
        ))}
      </div>
      <div className="ml-[17px] mr-[19px] mt-[14px] flex h-6 items-center justify-between">
        <Pick label="Sort by" value="Relevance" className="h-6 w-[160px]" />
        <span className="mt-1">92 671 results</span>
      </div>
      <div className="mt-2.5 flex h-[565px] pl-[17px]">
        <div className="flex flex-1 flex-col gap-2.5 overflow-hidden">
          {sounds.map((s, i) => <SoundCard key={s.title} s={s} active={i === 0} />)}
        </div>
        <div className="ml-2.5 mr-px h-[25px] w-2 bg-[#4a4a4a]" />
      </div>
      <div className="ml-[17px] mt-[18px] flex h-5 items-center">
        <label className="flex items-center gap-2">
          <input type="checkbox" defaultChecked className="peer sr-only" />
          <span className="flex h-3 w-6 items-center justify-end rounded-full bg-[#c0c0c0] px-0.5"><span className="h-2.5 w-2.5 rounded-full bg-[#111]" /></span>
          Timeline sync
        </label>
        <Btn label="Mute" className="ml-auto text-[#777]"><Volume2 size={14} fill="currentColor" /></Btn>
        <span className="ml-3 h-0.5 w-[57px] bg-[#555]" />
        <span className="ml-1 h-[14px] w-[14px] rounded-full border-2 border-[#c8c8c8]" />
        <span className="ml-1 mr-[26px] h-0.5 w-1.5 bg-[#555]" />
      </div>
    </section>
  );
}

/* ---------- windows chrome ---------- */
function TitleBar() {
  return (
    <header className="flex h-[23px] shrink-0 items-center bg-gradient-to-r from-[#ecf3f8] via-[#f0f3f8] to-[#f4f3f3] text-[12px] text-[#1a1a1a]">
      <span className="ml-0.5 mr-1.5 flex h-4 w-4 items-center justify-center rounded-[3px] bg-[#00005b] text-[9px] font-bold leading-none text-[#a8a8ff]">Pr</span>
      <h1 className="flex-1">Adobe Premiere Pro 2025 - D:\Work\tmp\Untitled555 *</h1>
      <Btn label="Minimize" className="w-[45px]"><Ico w={11} h={11}><path d="M0 5.500H10" stroke="currentColor" /></Ico></Btn>
      <Btn label="Restore" className="w-[45px]">
        <Ico w={11} h={11}><path d="M.5 2.500H7.500V10.500H.5ZM3 .5H8.500Q9.500.5 9.500 2V8" fill="none" stroke="currentColor" /></Ico>
      </Btn>
      <Btn label="Close" className="mr-[3px] w-[45px]"><Ico w={11} h={11}><path d="M.5.5 10.500 10.500M10.500.5.5 10.500" stroke="currentColor" /></Ico></Btn>
    </header>
  );
}

function WorkspaceBar() {
  return (
    <div className="grid h-[36px] shrink-0 grid-cols-[1fr_auto_1fr] items-center bg-[#1d1d1d] text-[13px] text-[#a8a8a8]">
      <nav className="flex h-full items-center pl-[31px]">
        <Btn label="Home" className="mr-[31px] pt-0.5"><Ico w={18} h={15} className="text-[#b8b8b8]"><path d="M9 0 18 8V9H16V15H11V10H7V15H2V9H0V8Z" /></Ico></Btn>
        <button type="button" className="mr-6 pt-0.5">Import</button>
        <button type="button" className="mr-6 h-full border-b-2 border-[#d8d8d8] pt-1 text-[#e0e0e0]">Edit</button>
        <button type="button" className="pt-0.5">Export</button>
      </nav>
      <p className="pt-0.5"><span className="text-[#d8d8d8]">Untitled555</span>&nbsp; - Edited</p>
      <div className="flex items-center justify-end gap-[28px] pr-5 text-[#b0b0b0]">
        <Btn label="Workspaces"><Ico w={16} h={13}><path d="M.7.7H15.300V12.300H.7Z" fill="none" stroke="currentColor" strokeWidth="1.400" /><path d="M2 3H4.500V10.500H2Z" /></Ico></Btn>
        <Btn label="Quick export"><Ico w={17} h={17}><path d="M5 6H1.500V15.500H15.500V6H12" fill="none" stroke="currentColor" strokeWidth="2" /><path d="M8.500 0 12 4H9.500V10H7.500V4H5Z" /></Ico></Btn>
        <Btn label="Progress"><Ico w={16} h={14}><path d="M0 0H16V4H0ZM0 5H16V9H0ZM0 10H16V14H0Z" /><path d="M6 2H15M10 7H15M5 12H14" stroke="#1d1d1d" /></Ico></Btn>
        <Btn label="Search"><Ico w={16} h={17}><circle cx="6.500" cy="7.500" r="5.300" fill="none" stroke="currentColor" strokeWidth="1.400" strokeDasharray="3 1" /><path d="M6.500 5 8.500 7.500 6.500 10 4.500 7.500ZM13 0 13.700 2.300 16 3 13.700 3.700 13 6 12.300 3.700 10 3 12.300 2.300Z" /><path d="M10.500 12 14 16" stroke="currentColor" strokeWidth="2" /></Ico></Btn>
        <Btn label="Full screen"><Ico w={16} h={16}><path d="M9 0H16V7L13.500 4.500 10.500 7.500 8.500 5.500 11.500 2.500ZM0 9 2.500 11.500 5.500 8.500 7.500 10.500 4.500 13.500 7 16H0Z" /></Ico></Btn>
      </div>
    </div>
  );
}

function Taskbar() {
  return (
    <footer className="grid h-12 shrink-0 grid-cols-[1fr_auto_1fr] items-center border-t border-[#4a4050] bg-[linear-gradient(90deg,#1c252f_0%,#1b2236_28%,#1b2048_36%,#331640_46%,#3a1242_62%,#35143a_80%,#321a35_100%)] text-[12px] text-white">
      <div className="flex items-center pl-5">
        <svg width="26" height="32" viewBox="0 0 26 32" aria-hidden="true">
          <path d="M5 8Q5 6 7.500 6 10 6 10 8V21Q12 22.500 12 25 12 29 7.500 29 3 29 3 25 3 22.500 5 21Z" fill="#a8d8ff" />
          <circle cx="7.500" cy="25" r="3" fill="#2090e0" />
          <path d="M7.500 12V24" stroke="#e05050" strokeWidth="2" />
          <path d="M16 15V27M14 19 16 15 18 19" stroke="#e02820" strokeWidth="2" fill="none" />
          <circle cx="18" cy="9" r="8" fill="#ff98a0" />
          <text x="15" y="13" fontSize="11" fill="#40101a">1</text>
        </svg>
        <div className="ml-[5px] leading-4"><p>Temps to rise</p><p className="text-[#c4c4cc]">Tomorrow</p></div>
      </div>
      <div className="flex items-center pl-2.5">
        <Btn label="Start" className="mr-3">
          <svg width="24" height="24" aria-hidden="true"><defs><linearGradient id="win" x1="0" y1="0" x2="1" y2="1"><stop offset="0" stopColor="#8ae4ff" /><stop offset="1" stopColor="#1a9cf0" /></linearGradient></defs><path d="M0 0H11V11H0ZM12 0H23V11H12ZM0 12H11V23H0ZM12 12H23V23H12Z" fill="url(#win)" /></svg>
        </Btn>
        <label className="mr-0.5 flex h-8 w-[220px] items-center rounded-full border border-[#6a5a70] bg-[#4a3a5c] pl-2.5 pr-3.5">
          <Search size={17} className="shrink-0" />
          <input aria-label="Поиск" placeholder="Поиск" className="ml-2.5 min-w-0 flex-1 bg-transparent text-[13px] outline-none placeholder:text-[#dcd8e0]" />
          <svg width="28" height="24" viewBox="0 0 28 24" aria-hidden="true">
            <path d="M8 12 0 12 2 20 9 18ZM20 12 28 12 26 20 19 18Z" fill="#b8a0d8" />
            <path d="M2 0 10 6H18L26 0 22 10Q24 18 14 19 4 18 6 10Z" fill="#a8d0c8" />
            <path d="M3 2 8 7 6.500 9ZM25 2 20 7 21.500 9Z" fill="#f09ab0" />
            <ellipse cx="14" cy="19" rx="5" ry="5" fill="#c0e0d8" />
            <circle cx="10.500" cy="11" r="2" fill="#303048" /><circle cx="17.500" cy="11" r="2" fill="#303048" />
          </svg>
        </label>
        <Btn label="Task view" className="w-11"><svg width="24" height="22" aria-hidden="true"><path d="M6 0H24V15H6Z" fill="#f4f4f4" /><path d="M0 6H17V22H0Z" fill="#808080" /><path d="M6 6H17V15H6Z" fill="#b8b8b8" /></svg></Btn>
        <Btn label="Explorer" className="w-11"><svg width="24" height="22" aria-hidden="true"><path d="M0 2Q0 0 2 0H8L10 3H22Q24 3 24 5V21H0Z" fill="#f0b429" /><path d="M0 6H24V21H0Z" fill="#ffd45c" /><path d="M5 16Q5 14 7 14H17Q19 14 19 16V21H5Z" fill="#1a80d8" /></svg></Btn>
        <Btn label="Store" className="w-11"><svg width="24" height="24" aria-hidden="true"><path d="M7 5V2Q7 1 8 1H16Q17 1 17 2V5" fill="none" stroke="#38b0f0" strokeWidth="2" /><rect x="1" y="5" width="22" height="18" rx="3" fill="#f4f4f6" /><path d="M7 9H11V13H7Z" fill="#f04e23" /><path d="M13 9H17V13H13Z" fill="#7cb82f" /><path d="M7 14.500H11V18.500H7Z" fill="#20a0e8" /><path d="M13 14.500H17V18.500H13Z" fill="#fbb800" /></svg></Btn>
        <Btn label="Edge" className="w-11">
          <svg width="24" height="24" viewBox="0 0 24 24" aria-hidden="true">
            <defs><linearGradient id="edge" x1="0" y1="0" x2="1" y2=".4"><stop offset="0" stopColor="#2ab0e8" /><stop offset="1" stopColor="#6ae06a" /></linearGradient></defs>
            <circle cx="12" cy="12" r="12" fill="#1464b8" />
            <path d="M0 11Q1 0 12 0 24 1 24 10 23 15 17 15 14 15 14 13.500 16 11 13 8 7 4 0 11Z" fill="url(#edge)" />
            <path d="M9 11Q5 17 10 21 14 24 19 22 23 19 23 17 14 20 11 15 10 13 11 10Z" fill="#0c3f88" />
          </svg>
        </Btn>
        <Btn label="Yandex" className="w-11"><svg width="24" height="38" viewBox="0 -7 24 38" aria-hidden="true"><circle cx="12" cy="12" r="12" fill="#fff" /><path d="M6 4Q11 7 12 13 13 7 18 4M12 12V21" fill="none" stroke="#f5301c" strokeWidth="3.500" /><rect x="9.500" y="28" width="5" height="2.500" rx="1" fill="#a898b0" /></svg></Btn>
        <Btn label="Creative Cloud" className="w-11">
          <svg width="22" height="38" viewBox="0 -7 22 38" aria-hidden="true">
            <defs><linearGradient id="cc" x1="0" y1="0" x2="1" y2="1"><stop offset="0" stopColor="#e81c24" /><stop offset=".3" stopColor="#f8a01c" /><stop offset=".5" stopColor="#e83c8c" /><stop offset=".75" stopColor="#3c6ce8" /><stop offset="1" stopColor="#30c8a0" /></linearGradient></defs>
            <rect y="1" width="22" height="22" rx="5" fill="url(#cc)" />
            <path d="M10 16H7Q4 16 4 13 4 10 7 10 8 7 12 7 18 8 18 12 18 16 14 16 12 16 8 11" fill="none" stroke="#fff" strokeWidth="1.800" />
            <circle cx="13.500" cy="12" r="2" fill="none" stroke="#fff" strokeWidth="1.500" />
            <rect x="8.500" y="28" width="5" height="2.500" rx="1" fill="#a898b0" />
          </svg>
        </Btn>
        <Btn label="Premiere Pro" className="h-[38px] w-10 flex-col gap-[5px] rounded bg-white/10 pt-1">
          <span className="flex h-[22px] w-[22px] items-center justify-center rounded bg-[#00005b] text-[12px] font-bold text-[#b0a8ff]">Pr</span>
          <span className="h-[3px] w-4 rounded-full bg-[#e0a0e8]" />
        </Btn>
      </div>
      <div className="flex items-center justify-end pr-[19px]">
        <Btn label="Hidden icons" className="mr-[18px]"><ChevronUp size={15} strokeWidth={2.500} /></Btn>
        <Btn label="Microphone" className="mr-[22px] text-[#e0b0e8]"><Mic size={16} strokeWidth={1.500} /></Btn>
        <span className="mr-[19px] text-[11px]">РУС</span>
        <Ico w={17} h={17} className="mr-2"><path d="M11 2.500H1V13H13V8M4 16H11M7 13V16M12.500 1H16V6H12.500ZM14.200 6V14" fill="none" stroke="currentColor" strokeWidth="1.300" /></Ico>
        <Volume2 size={17} strokeWidth={1.500} className="mr-4" />
        <div className="text-right text-[11px] leading-4"><p>9:19</p><p>17.04.2025</p></div>
      </div>
    </footer>
  );
}

const Scribble = () => (
  <svg viewBox="0 0 1920 1080" className="pointer-events-none absolute inset-0 h-full w-full" fill="none" stroke="#c04d40" strokeOpacity="0.7" strokeWidth="15" strokeLinecap="round" strokeLinejoin="round" aria-hidden="true">
    <path d="M881 494 873 493 866 500 860 513 850 530 840 557 830 587 828 607 828 632 838 650 860 667 885 675 917 679 938 678 966 668 989 650 1001 627 1006 597 1004 573 995 553 979 537 960 523 920 515 881 515 860 520 848 526" />
    <path d="M1020 395 1015 415 1013 453 1020 503 1034 560 1048 617 1062 657 1076 684 1079 674" />
    <path d="M1112 422 1103 447 1077 493 1056 527 1036 553 1020 568 1011 572 1032 573 1093 598 1150 615 1175 618 1184 625" />
  </svg>
);

export default function App() {
  return (
    <div className="relative flex h-screen flex-col overflow-hidden bg-black font-['Roboto',sans-serif] text-[11px] leading-[14px]">
      <TitleBar />
      <nav className="flex h-5 shrink-0 items-center gap-[13px] border-b-2 border-[#f0f0f0] bg-white pl-[7px] pt-0.5 text-[12px] text-[#111]">
        {['File', 'Edit', 'Clip', 'Sequence', 'Markers', 'Graphics and Titles', 'View', 'Window', 'Help'].map((m) => (
          <button key={m} type="button">{m}</button>
        ))}
      </nav>
      <WorkspaceBar />
      <main className="flex min-h-0 flex-1 gap-1 px-px pb-0.5 pt-0.5">
        <ProjectPanel />
        <div className="flex min-w-0 flex-1 flex-col gap-1">
          <div className="flex h-[580px] shrink-0 gap-1">
            <MixerPanel />
            <ProgramPanel />
          </div>
          <div className="flex min-h-0 flex-1 gap-1">
            <ToolsPanel />
            <TimelinePanel />
            <MeterPanel />
          </div>
        </div>
        <SoundPanel />
      </main>
      <p className="flex h-5 shrink-0 items-center bg-[#1d1d1d] pl-[15px] text-[#b0b0b0]">Click to select, or click in empty space and drag to marquee select. Use Shift, Alt, and Ctrl for other options.</p>
      <Taskbar />
      <Scribble />
      <div role="tooltip" className="absolute left-[1103px] top-[975px] w-[420px] whitespace-nowrap rounded-sm border border-[#ccc]/60 bg-[#b8b8b8]/90 py-0.5 pl-[5px] font-['Liberation_Sans'] text-[11px] leading-[15px] text-[#505050]">
        <p>MELLOW HAPPY ELECTRONIC (VALET_Adobestock_1373124917_preview.m4a</p>
        <p>Start: 00;00;00;00</p>
        <p>End: 00;02;57;21</p>
        <p>Duration: 00;02;57;22</p>
      </div>
    </div>
  );
}
